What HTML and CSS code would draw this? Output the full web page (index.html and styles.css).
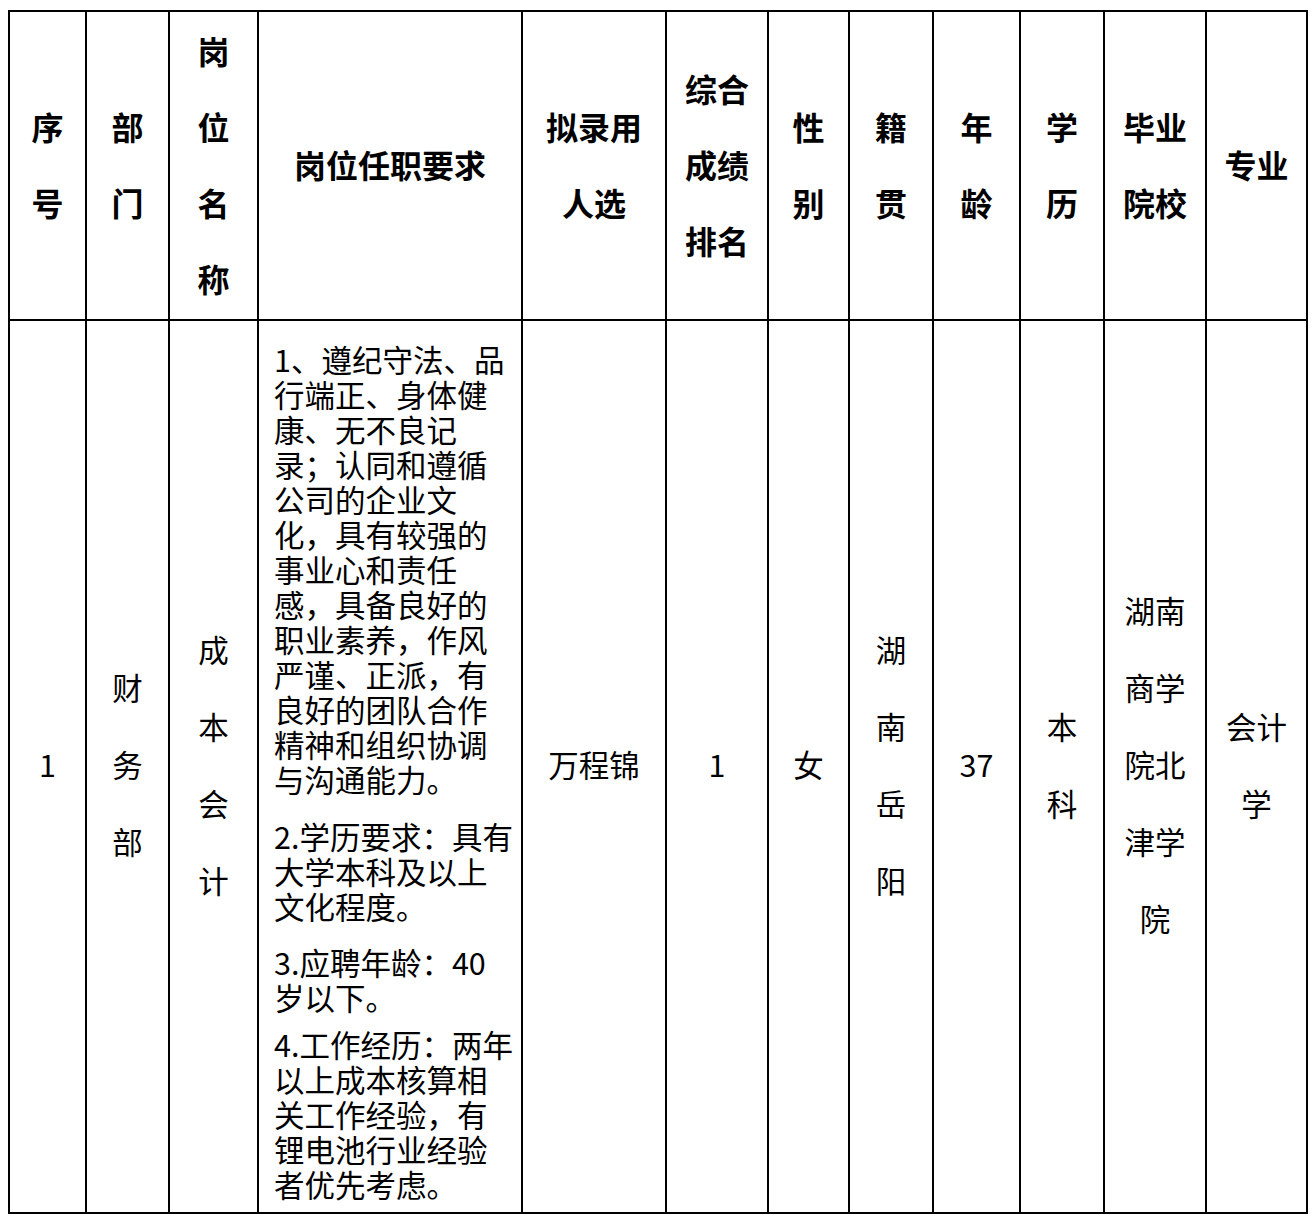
FILE: index.html
```html
<!DOCTYPE html>
<html lang="zh-CN">
<head>
<meta charset="utf-8">
<title>拟录用人选</title>
<link rel="stylesheet" href="styles.css">
</head>
<body>
<table class="sheet">
  <colgroup>
    <col class="c1"><col class="c2"><col class="c3"><col class="c4"><col class="c5"><col class="c6">
    <col class="c7"><col class="c8"><col class="c9"><col class="c10"><col class="c11"><col class="c12">
  </colgroup>
  <tr class="head">
    <th>序<br>号</th>
    <th>部<br>门</th>
    <th>岗<br>位<br>名<br>称</th>
    <th>岗位任职要求</th>
    <th>拟录用<br>人选</th>
    <th>综合<br>成绩<br>排名</th>
    <th>性<br>别</th>
    <th>籍<br>贯</th>
    <th>年<br>龄</th>
    <th>学<br>历</th>
    <th>毕业<br>院校</th>
    <th>专业</th>
  </tr>
  <tr class="data">
    <td>1</td>
    <td>财<br>务<br>部</td>
    <td>成<br>本<br>会<br>计</td>
    <td class="req">
      <p>1、遵纪守法、品<br>行端正、身体健<br>康、无不良记<br>录；认同和遵循<br>公司的企业文<br>化，具有较强的<br>事业心和责任<br>感，具备良好的<br>职业素养，作风<br>严谨、正派，有<br>良好的团队合作<br>精神和组织协调<br>与沟通能力。</p>
      <p class="p2">2.学历要求：具有<br>大学本科及以上<br>文化程度。</p>
      <p class="p3">3.应聘年龄：40<br>岁以下。</p>
      <p class="p4">4.工作经历：两年<br>以上成本核算相<br>关工作经验，有<br>锂电池行业经验<br>者优先考虑。</p>
    </td>
    <td>万程锦</td>
    <td>1</td>
    <td>女</td>
    <td>湖<br>南<br>岳<br>阳</td>
    <td>37</td>
    <td>本<br>科</td>
    <td>湖南<br>商学<br>院北<br>津学<br>院</td>
    <td>会计<br>学</td>
  </tr>
</table>
</body>
</html>
```

FILE: styles.css
```css
html, body {
  margin: 0;
  padding: 0;
  background: #ffffff;
}

body {
  font-family: "Noto Sans CJK SC", "Noto Sans", sans-serif;
  color: #000000;
}

.sheet {
  border-collapse: separate;
  border-spacing: 0;
  table-layout: fixed;
  width: 1300px;
  margin: 10px 0 0 8px;
  border-left: 2px solid #000000;
  border-top: 2px solid #000000;
}

.c1 { width: 77px; }
.c2 { width: 83px; }
.c3 { width: 89px; }
.c4 { width: 264px; }
.c5 { width: 144px; }
.c6 { width: 102px; }
.c7 { width: 81px; }
.c8 { width: 84px; }
.c9 { width: 87px; }
.c10 { width: 84px; }
.c11 { width: 102px; }
.c12 { width: 101px; }

.sheet th,
.sheet td {
  border-right: 2px solid #000000;
  border-bottom: 2px solid #000000;
  padding: 0 0 4px 0;
  text-align: center;
  vertical-align: middle;
  font-size: 30.5px;
  line-height: 77px;
  white-space: nowrap;
}

.sheet th {
  font-weight: 700;
  font-size: 32px;
  line-height: 76px;
  padding: 0 0 3px 0;
}

.head {
  height: 300px;
}

.data {
  height: 893px;
}

.sheet td.req {
  text-align: left;
  vertical-align: top;
  padding: 21px 0 0 15px;
  line-height: 35px;
}

.req p {
  margin: 0;
}

.req .p2 { margin-top: 22px; }
.req .p3 { margin-top: 21px; }
.req .p4 { margin-top: 12px; }
```
